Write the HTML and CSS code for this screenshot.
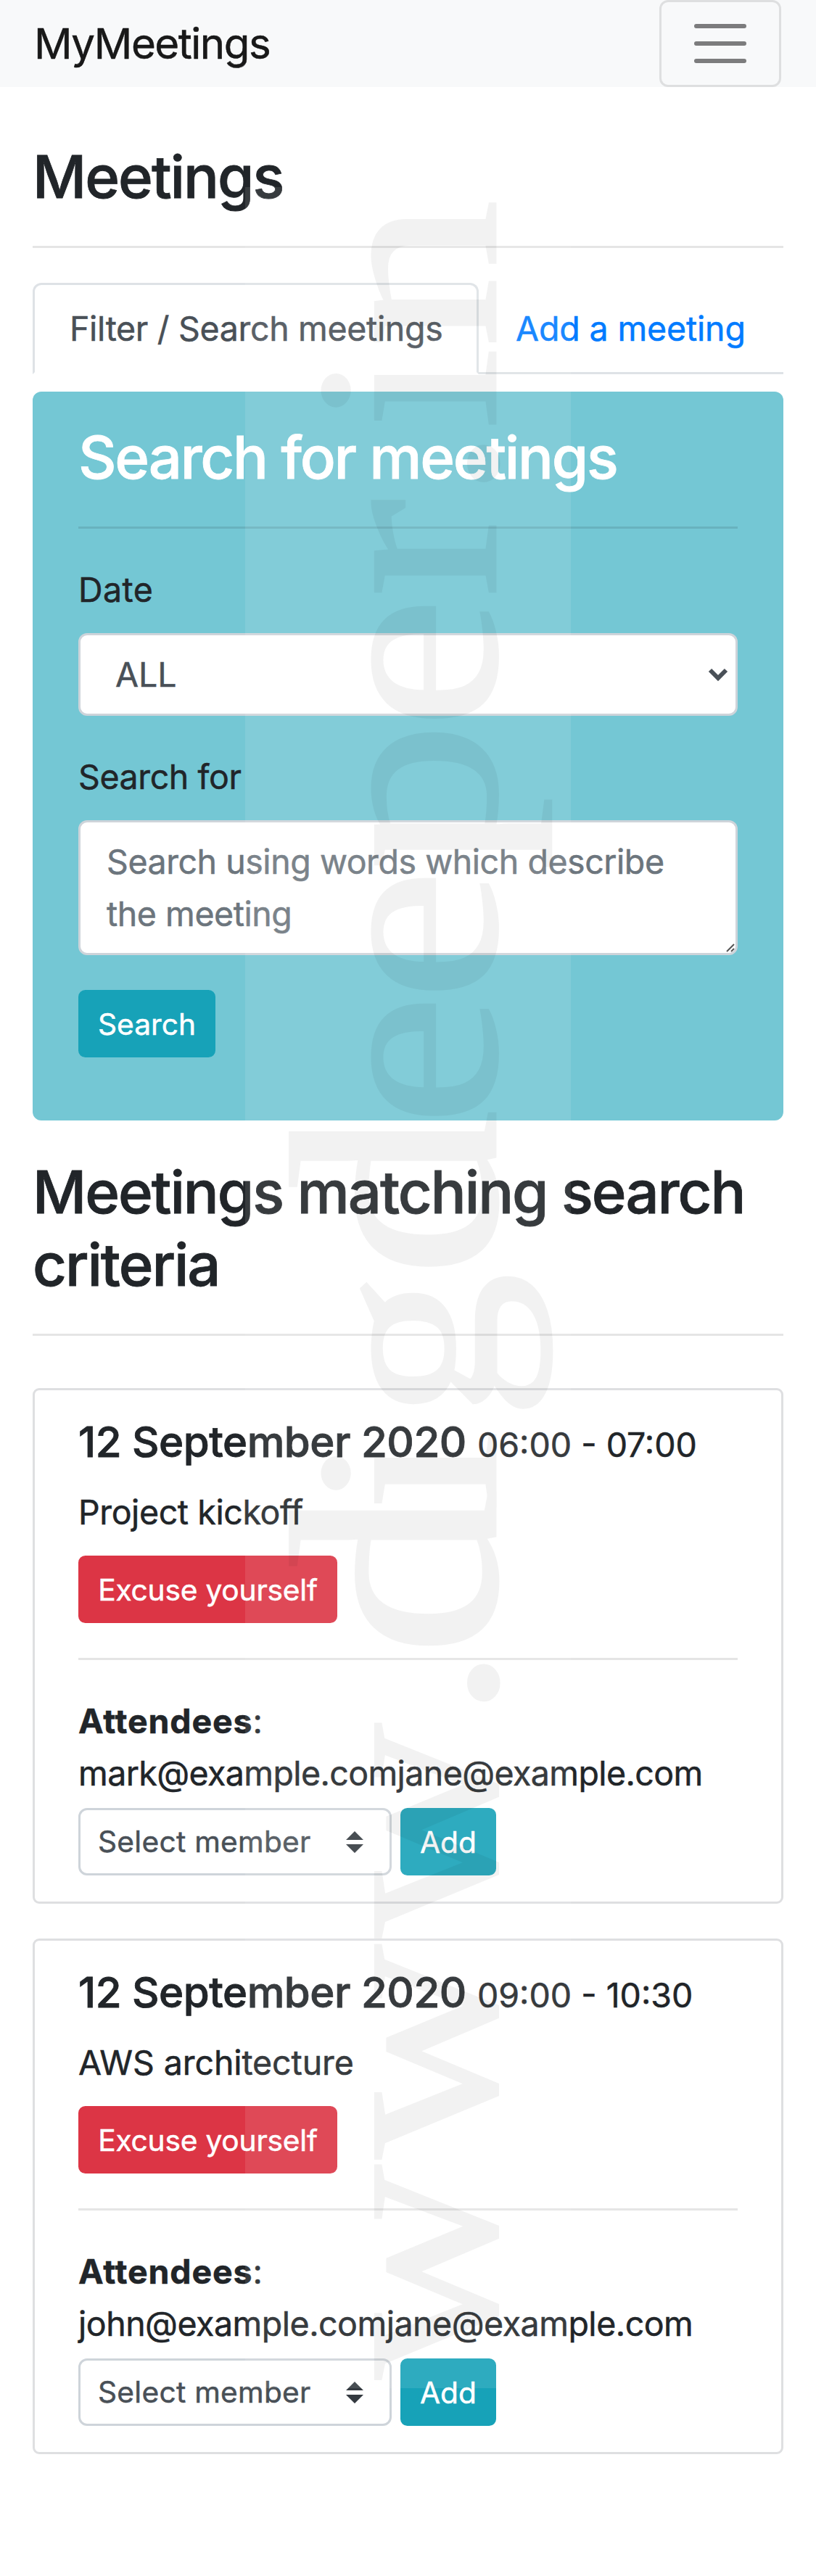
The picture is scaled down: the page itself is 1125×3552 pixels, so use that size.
FILE: index.html
```
<!DOCTYPE html>
<html lang="en">
<head>
<meta charset="utf-8">
<title>MyMeetings</title>
<link rel="stylesheet" href="styles.css">
</head>
<body>
<nav class="navbar">
  <a class="brand">MyMeetings</a>
  <button class="toggler" aria-label="Toggle navigation">
    <svg width="90" height="90" viewBox="0 0 30 30"><path stroke="rgba(0,0,0,.5)" stroke-width="2" stroke-linecap="round" d="M4 7h22M4 15h22M4 23h22"/></svg>
  </button>
</nav>
<main class="container">
  <h3 class="heading page-title">Meetings</h3>
  <hr>
  <ul class="tabs">
    <li class="tab active">Filter / Search meetings</li>
    <li class="tab add">Add a meeting</li>
  </ul>
  <section class="panel">
    <h3 class="heading panel-title">Search for meetings</h3>
    <hr>
    <form>
      <label class="label date-label">Date</label>
      <div class="control select"><span>ALL</span>
        <svg width="28" height="19" viewBox="0 0 28 19"><path d="M3 3l11 11L25 3" fill="none" stroke="#495057" stroke-width="6"/></svg>
      </div>
      <label class="label search-label">Search for</label>
      <div class="textarea-wrap">
        <textarea class="control textarea" placeholder="Search using words which describe the meeting"></textarea>
        <svg class="grip" width="12" height="12" viewBox="0 0 12 12"><path d="M1 11L11 1M7 11l4-4" stroke="#555" stroke-width="2"/></svg>
      </div>
      <button type="button" class="btn info">Search</button>
    </form>
  </section>
  <h3 class="heading results-title">Meetings matching search criteria</h3>
  <hr>
  <article class="card first">
    <h5 class="card-title">12 September 2020 <small>06:00 - 07:00</small></h5>
    <p class="desc project">Project kickoff</p>
    <button class="btn danger">Excuse yourself</button>
    <hr>
    <p class="attendees"><b>Attendees</b>:<br><span class="mails">mark@example.comjane@example.com</span></p>
    <div class="row">
      <div class="member"><span>Select member</span>
        <svg width="24" height="30" viewBox="0 0 24 30"><path d="M0 12L12 0l12 12zM0 18h24L12 30z" fill="#343a40"/></svg>
      </div>
      <button class="btn info add-btn">Add</button>
    </div>
  </article>
  <article class="card">
    <h5 class="card-title">12 September 2020 <small>09:00 - 10:30</small></h5>
    <p class="desc">AWS architecture</p>
    <button class="btn danger">Excuse yourself</button>
    <hr>
    <p class="attendees"><b>Attendees</b>:<br><span class="mails john">john@example.comjane@example.com</span></p>
    <div class="row">
      <div class="member"><span>Select member</span>
        <svg width="24" height="30" viewBox="0 0 24 30"><path d="M0 12L12 0l12 12zM0 18h24L12 30z" fill="#343a40"/></svg>
      </div>
      <button class="btn info add-btn">Add</button>
    </div>
  </article>
</main>
<svg class="watermark" width="1125" height="3552" viewBox="0 0 1125 3552">
  <rect x="338" y="258" width="449" height="3035" fill="#fff" fill-opacity=".1"/>
  <g opacity=".048" transform="translate(683 3290) rotate(-90) scale(1.08 .95)">
    <text class="mark" x="8.6 290.1 572.5 850.2 931 1115.3 1232.6 1415 1608.1 1768.3 1934.7 2115.4 2283.5 2407.1 2497.7 2602">www.<tspan class="tall">d</tspan>ig<tspan class="tall">d</tspan>eeper.in</text>
  </g>
</svg>
</body>
</html>
```
FILE: styles.css
```
* { box-sizing: border-box; }
body { margin: 0; position: relative; height: 3552px; background: #fff; color: #212529; font: 46.5px/72px Inter, "Liberation Sans", sans-serif; -webkit-text-stroke: .5px; }
h3, h5, p, ul { margin: 0; padding: 0; }
button { margin: 0; font-family: inherit; -webkit-text-stroke: .5px; }
hr { margin: 48px 0; height: 3px; border: 0; background: rgba(0,0,0,.1); }

.navbar { display: flex; align-items: center; justify-content: space-between; height: 120px; padding: 0 48px 0 47px; background: #f8f9fa; }
.brand { font-size: 58.2px; letter-spacing: -1.5px; color: rgba(0,0,0,.9); }
.toggler { display: flex; align-items: center; justify-content: center; width: 168px; height: 120px; padding: 0; background: none; border: 3px solid rgba(0,0,0,.1); border-radius: 12px; }

.container { padding: 0 45px; }
.heading { font-size: 81.4px; font-weight: 500; line-height: 100px; letter-spacing: -2px; -webkit-text-stroke: .8px; }
.heading + hr { margin-top: 45px; }
.page-title { padding-top: 74px; }

.tabs { display: flex; list-style: none; border-bottom: 3px solid #dee2e6; }
.tab { height: 126px; margin-bottom: -3px; padding: 24px 48px; border: 3px solid transparent; border-radius: 12px 12px 0 0; white-space: nowrap; }
.active { width: 615px; color: #495057; background: #fff; border-color: #dee2e6 #dee2e6 #fff; letter-spacing: -.33px; }
.add { color: #007bff; letter-spacing: -.15px; }

.panel { height: 1005px; margin-top: 24px; padding: 41px 63px; background: #74c7d4; border-radius: 12px; }
.panel-title { color: #fff; letter-spacing: -2.25px; }
.label { display: block; margin-bottom: 24px; }
.date-label { letter-spacing: .4px; }
.search-label { letter-spacing: -.4px; }
.control { width: 100%; background: #fff; border: 3px solid #ced4da; border-radius: 12px; color: #495057; }
.select { display: flex; align-items: center; justify-content: space-between; height: 114px; margin-bottom: 48px; padding: 0 10px 0 48px; }
.textarea-wrap { position: relative; height: 186px; margin-bottom: 48px; }
.textarea { display: block; height: 186px; padding: 18px 36px; font: inherit; letter-spacing: -.45px; resize: none; overflow: hidden; outline: 0; -webkit-text-stroke: .5px; }
.textarea::placeholder { color: #6c757d; opacity: 1; }
.grip { position: absolute; right: 4px; bottom: 4px; }

.btn { display: block; height: 93px; padding: 13px 24px 11px; border: 3px solid; border-radius: 9.6px; color: #fff; font-size: 40.7px; line-height: 63px; white-space: nowrap; }
.info { width: 189px; background: #17a2b8; border-color: #17a2b8; }
.danger { width: 357px; background: #dc3545; border-color: #dc3545; letter-spacing: -.2px; }
.add-btn { width: 132px; }

.results-title { margin-top: 49px; letter-spacing: -2.05px; }
.card { height: 711px; margin-top: 48px; padding: 36px 60px; border: 3px solid #dedfe1; border-radius: 9px; }
.first { margin-top: 72px; }
.card-title { height: 72px; margin-bottom: 24px; font-size: 58.2px; font-weight: 500; line-height: 70px; letter-spacing: -.5px; white-space: nowrap; -webkit-text-stroke: .8px; }
.card-title small { font-size: 46.5px; font-weight: 400; line-height: 1; letter-spacing: 0; -webkit-text-stroke: .5px; }
.desc { margin-bottom: 24px; letter-spacing: -.1px; }
.project { letter-spacing: -.4px; }
.attendees b { letter-spacing: .85px; }
.mails { letter-spacing: -.6px; }
.john { letter-spacing: -.5px; }
.row { display: flex; gap: 12px; margin-top: 12px; }
.member { display: flex; align-items: center; justify-content: space-between; width: 432px; height: 93px; padding: 0 36px 0 24px; border: 3px solid #ced4da; border-radius: 12px; color: #495057; font-size: 40.7px; letter-spacing: .25px; }

.watermark { position: absolute; top: 0; left: 0; pointer-events: none; -webkit-text-stroke: 0; }
.mark { font: 380px "Liberation Serif", serif; fill: #000; stroke: #000; stroke-width: 3px; }
.tall { font-size: 430px; }
```
